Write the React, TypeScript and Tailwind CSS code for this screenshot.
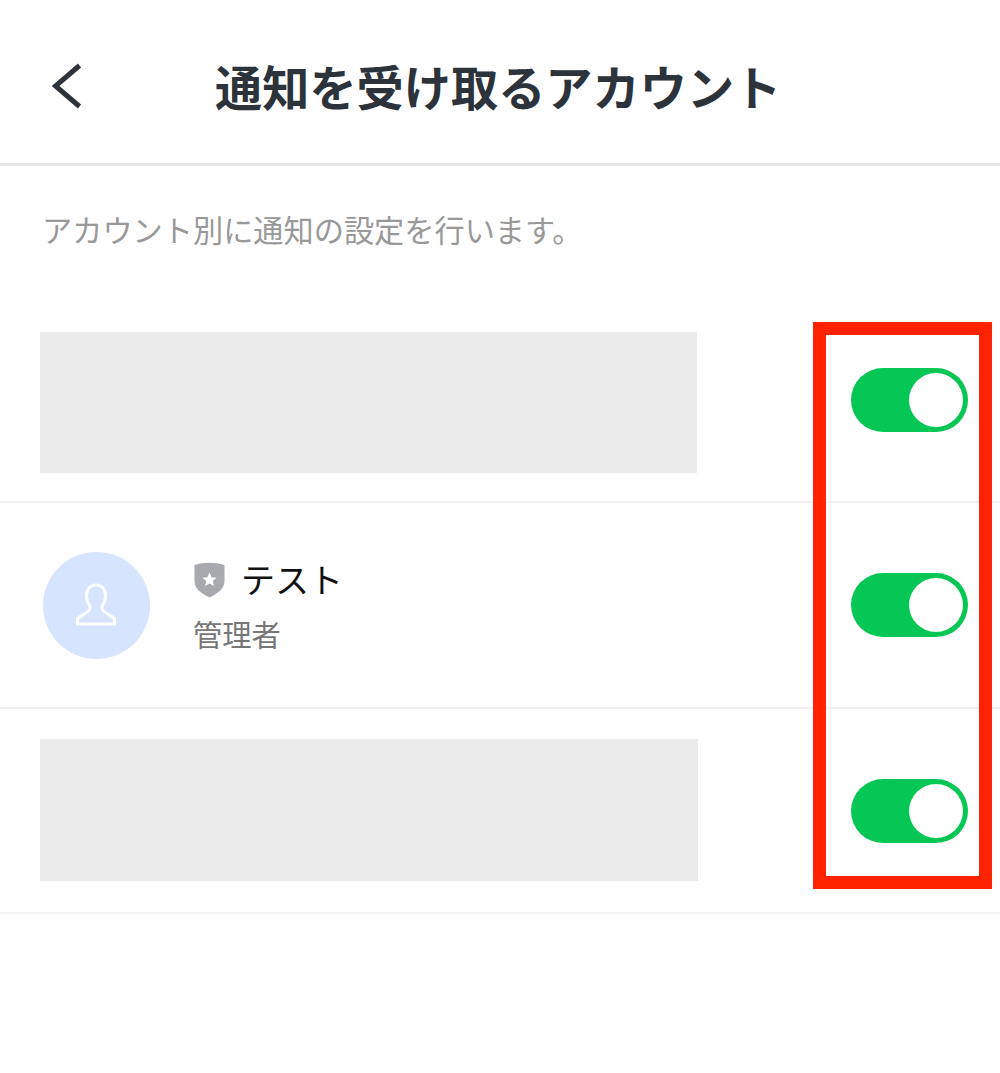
const font = { fontFamily: '"Noto Sans CJK JP", "Noto Sans", sans-serif' };

function Toggle() {
  return (
    <div className="flex h-[64px] w-[117px] shrink-0 items-center justify-end rounded-full bg-[#06c755] pr-[5px]">
      <div className="h-[54px] w-[54px] rounded-full bg-white" />
    </div>
  );
}

function Placeholder({ width, height, className }: { width: string; height: string; className?: string }) {
  return <div className={`bg-[#ebebeb] ${width} ${height} ${className ?? ''}`} />;
}

function Row({ children, className }: { children: React.ReactNode; className: string }) {
  return (
    <div className={`flex items-center justify-between border-b-2 border-[#f0f0f0] pl-[40px] pr-[32px] ${className}`}>
      {children}
      <Toggle />
    </div>
  );
}

export default function App() {
  return (
    <div className="relative h-[1073px] w-[1000px] overflow-hidden bg-white" style={font}>
      <header className="relative flex h-[166px] items-center border-b-[3px] border-[#e4e6e8] pl-[52px]">
        <svg width="32" height="46" viewBox="0 0 32 46" fill="none" className="mt-[8px] shrink-0">
          <path d="M27.5 2.5 L3.5 23 L27.5 43.5" stroke="#2c333b" strokeWidth="5" />
        </svg>
        <h1 className="ml-[131px] mt-[9px] whitespace-nowrap text-[47.2px] leading-none font-bold text-[#2c333b]">
          通知を受け取るアカウント
        </h1>
      </header>

      <p className="flex h-[132px] items-start pt-[44px] pl-[42px] text-[30.2px] leading-[38px] text-[#999999]">
        アカウント別に通知の設定を行います。
      </p>

      <Row className="h-[205px]">
        <Placeholder width="w-[657px]" height="h-[141px]" className="mt-[5px]" />
      </Row>

      <Row className="h-[206px]">
        <div className="flex items-center pl-[3px]">
          <div className="flex h-[107px] w-[107px] items-center justify-center rounded-full bg-[#d6e4fd]">
            <svg width="42" height="44" viewBox="0 0 42 44" fill="none" className="mr-[2px]">
              <path
                d="M2.5 41 V35.5 C7 32 15 29 15 25 V23 C12.5 20 11.5 16 11.5 12 C11.5 6 15.5 2 21 2 C26.5 2 30.5 6 30.5 12 C30.5 16 29.5 20 27 23 V25 C27 29 35 32 39.5 35.5 V41 Z"
                stroke="#ffffff"
                strokeWidth="3"
              />
            </svg>
          </div>
          <div className="ml-[43px] flex flex-col">
            <div className="flex items-center">
              <svg width="33" height="36" viewBox="0 0 33 36" className="mt-[2px] shrink-0">
                <path d="M1.5 3 C11 0 22 0 31.5 3 V19 C31.5 27 24 32 16.5 35.5 C9 32 1.5 27 1.5 19 Z" fill="#a7a9ae" />
                <path
                  d="M16.5 10.5 L18.6 15.2 L23.6 15.7 L19.8 19 L20.9 24 L16.5 21.4 L12.1 24 L13.2 19 L9.4 15.7 L14.4 15.2 Z"
                  fill="#ffffff"
                />
              </svg>
              <span className="ml-[15px] text-[34px] leading-[40px] text-[#111111]">テスト</span>
            </div>
            <span className="mt-[16px] text-[29.3px] leading-[36px] text-[#777777]">管理者</span>
          </div>
        </div>
      </Row>

      <Row className="h-[205px]">
        <Placeholder width="w-[658px]" height="h-[142px]" className="mt-[-1px]" />
      </Row>

      <div className="absolute left-[813px] top-[322px] h-[567px] w-[179px] border-[13px] border-[#ff2200]" />
    </div>
  );
}
